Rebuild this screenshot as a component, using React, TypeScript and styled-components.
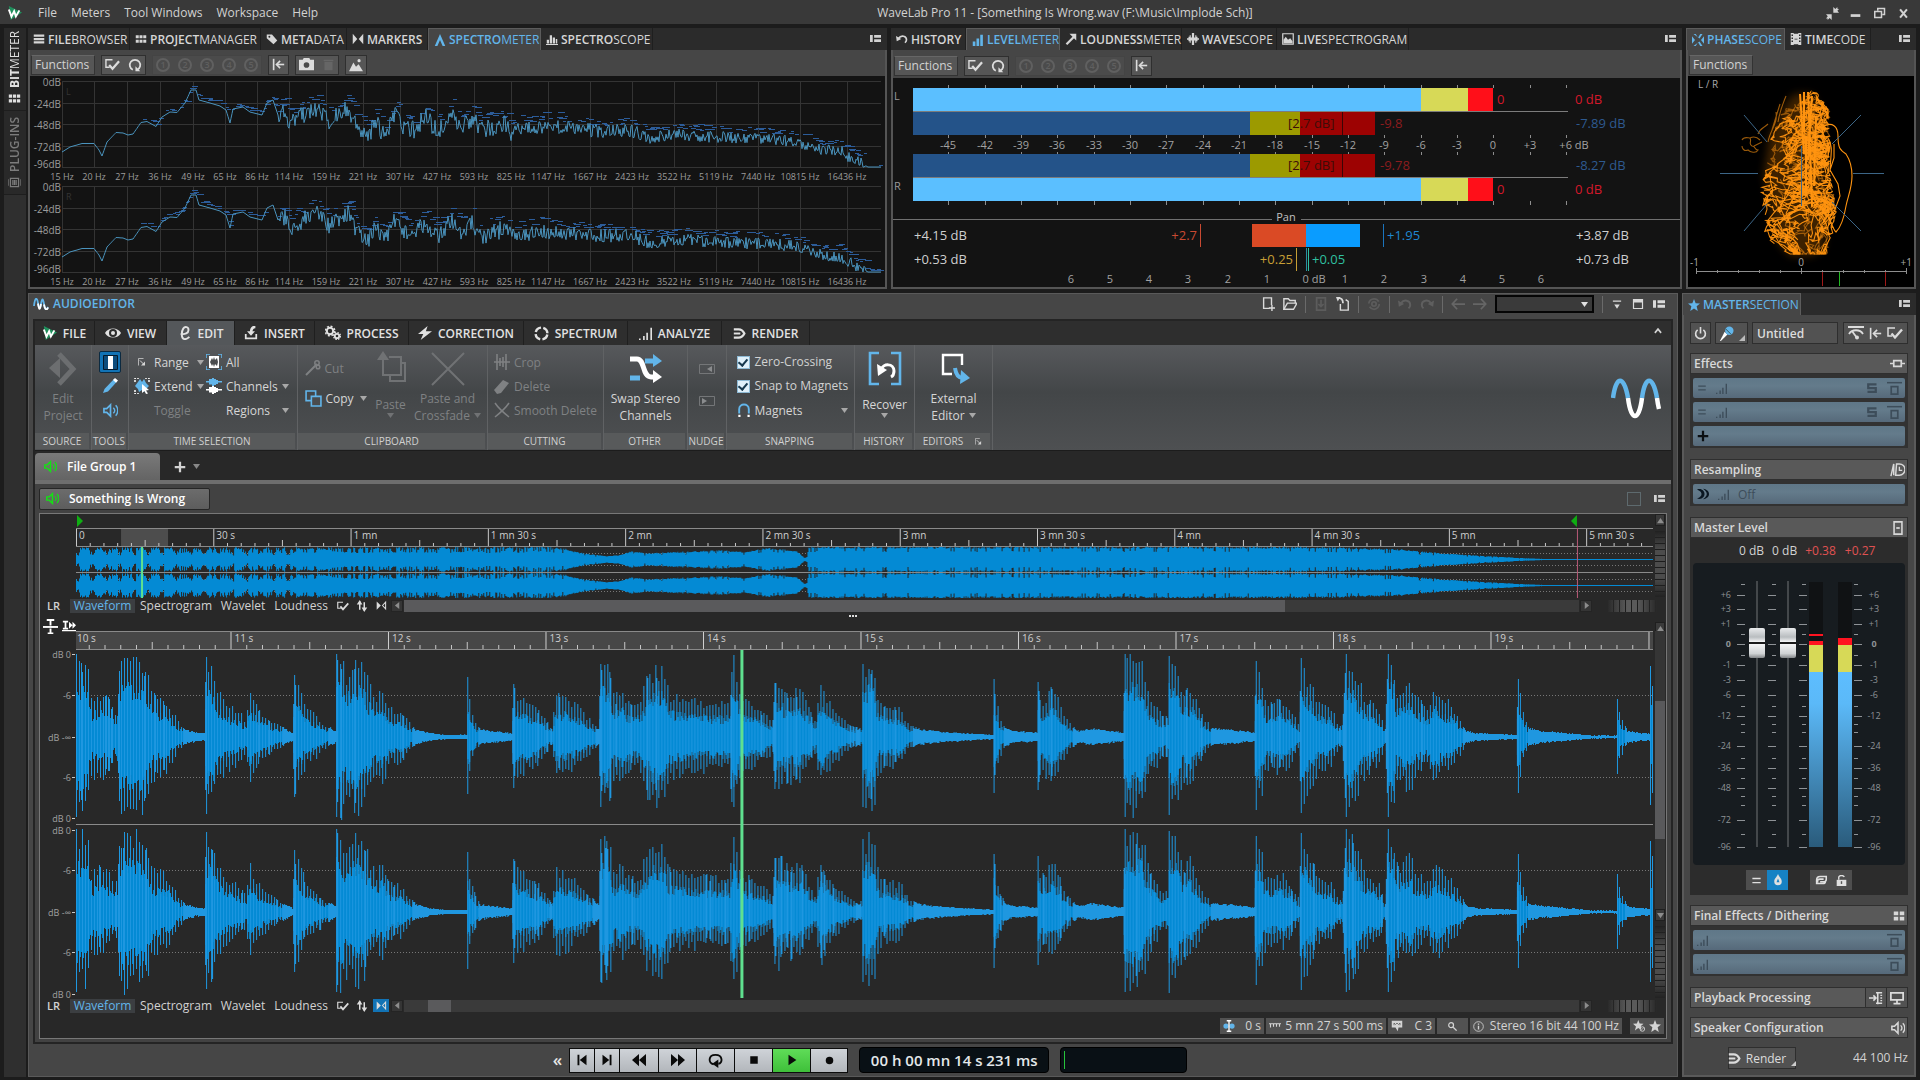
import React from 'react';
import styled, { createGlobalStyle, css } from 'styled-components';

const Global = createGlobalStyle`
  * { box-sizing: border-box; }
  html, body { margin: 0; background: #1c1c1c; }
  body, button, input, select { font-family: "Open Sans", "Noto Sans", sans-serif; font-size: 12px; color: #d2d2d2; }
  button { border: 0; padding: 0; background: none; margin: 0; }
  svg { display: block; flex: none; }
`;

const BLUE = '#62b5ea';

/* ---------- numeric helpers ---------- */

const rng = (seed: number) => () => {
  seed = (seed + 0x6d2b79f5) | 0;
  let t = Math.imul(seed ^ (seed >>> 15), 1 | seed);
  t = (t + Math.imul(t ^ (t >>> 7), 61 | t)) ^ t;
  return ((t ^ (t >>> 14)) >>> 0) / 4294967296;
};

const pct = (w: number) => (x: number) => `${((x / w) * 100).toFixed(3)}%`;

type Pts = number[][];
const lerpAt = (pts: Pts) => {
  let i = 0;
  return (x: number) => {
    while (i < pts.length - 2 && x > pts[i + 1][0]) i++;
    const [x0, y0] = pts[i];
    const [x1, y1] = pts[i + 1];
    const t = Math.min(1, Math.max(0, (x - x0) / (x1 - x0)));
    return y0 + (y1 - y0) * t;
  };
};
const lerpOnce = (pts: Pts) => (x: number) => lerpAt(pts)(x);

/* ---------- icons ---------- */

const S = (d: string, w = 2) => <path d={d} fill="none" stroke="currentColor" strokeWidth={w} />;
const F = (d: string) => <path d={d} fill="currentColor" />;

const ICONS: Record<string, React.ReactNode> = {
  list: F('M1 2h14v3H1zM1 6.500h14v3H1zM1 11h14v3H1z'),
  grid: F('M1 3h4v4H1zM6 3h4v4H6zM11 3h4v4h-4zM1 9h4v4H1zM6 9h4v4H6zM11 9h4v4h-4z'),
  tag: <><path d="M1 2h7l7 8-5 5-9-8z" fill="currentColor" /><circle cx="4.500" cy="5" r="1.300" fill="#2b2b2b" /></>,
  markers: F('M1 1l6 7-6 7zM15 1L9 8l6 7z'),
  peak: F('M8 0l7 16h-3.500L8 8l-3.500 8H1z'),
  bars: F('M1 9h3v5H1zM5 3h3v11H5zM9 6h3v8H9zM13 8h2v6h-2zM0 14.500h16v1.500H0z'),
  level: F('M1 10h3.500v6H1zM6 6h3.500v10H6zM11 1h3.500v15H11z'),
  menu: F('M0 3h4v10H0zM6 3h10v4H6zM6 9h10v4H6z'),
  undo: <>{S('M3.500 7C7 2 14 4 14 9c0 2-1 3-2 4', 2.200)}{F('M0 4l1 7 6-3z')}</>,
  redo: <>{S('M12.500 7C9 2 2 4 2 9c0 2 1 3 2 4', 2.200)}{F('M16 4l-1 7-6-3z')}</>,
  diag: <>{S('M2 15L12 5', 3)}{F('M6 1h9v9z')}</>,
  scope: F('M0 7h2V5h1.500V3H5v3h1.500V0h3v6H11V3h1.500v2H14v2h2v2h-2v2h-1.500v2H11v-3H9.500v6h-3v-6H5v3H3.500v-2H2V9H0z'),
  picture: <>{S('M1 1h14v14H1z', 1.600)}{F('M2 14V9l3-4 3 4 3-2 3 4v3z')}</>,
  film: <>{F('M1 0h4v16H1zM11 0h4v16h-4zM5 1h6v14H5z')}<path d="M2 2h2v2H2zM2 6h2v2H2zM2 10h2v2H2zM12 2h2v2h-2zM12 6h2v2h-2zM12 10h2v2h-2zM6 7.500h4v1H6z" fill="#2b2b2b" /></>,
  phase: F('M2 0h3l3 5 3-5h3l-4 6zM2 16h3l3-5 3 5h3l-4-6zM0 3l4 5-4 5zM16 3l-4 5 4 5z'),
  check: <>{S('M8 3H1v8h4', 1.500)}{S('M4.500 8.500l3.500 4 7-8', 2.400)}</>,
  loop: <>{S('M5.500 13.500A6 6 0 1 1 10.500 13.500', 2)}{F('M14 15H8.500V9.500z')}</>,
  back: <>{S('M2 1v14', 2)}{S('M15 8H6', 2)}{S('M10 3.500L5.500 8l4.500 4.500', 2)}</>,
  camera: <><path d="M0 3h4l1-2h6l1 2h4v11H0z" fill="currentColor" /><circle cx="8" cy="8.500" r="3" fill="#4a4a4a" /></>,
  trash: <>{F('M3 5h10v10H3zM2 2h12v2H2z')}</>,
  mountain: <>{F('M0 15l5-10 3 5 3-3 5 8z')}<circle cx="11.500" cy="3" r="1.800" fill="currentColor" /></>,
  eye: <><path d="M0 8C3 2 13 2 16 8c-3 6-13 6-16 0z" fill="currentColor" /><circle cx="8" cy="8" r="4" fill="#2c2c2c" /><circle cx="8" cy="8" r="2" fill="currentColor" /></>,
  e: S('M3 9c5 1 9-1 9-4.500S8 0 6 3s-3 12 2 12c2 0 3.500-1 5-2.500', 2.200),
  insert: <>{S('M2 9v5h12V9', 2)}{S('M13 1C9 1 8 4 8 8', 3)}{F('M3.500 6h9L8 11z')}</>,
  cogs: <><circle cx="5" cy="6" r="3.200" fill="none" stroke="currentColor" strokeWidth="2" /><circle cx="5" cy="6" r="4.800" fill="none" stroke="currentColor" strokeWidth="1.400" strokeDasharray="2 1.770" /><circle cx="12" cy="11" r="2.200" fill="none" stroke="currentColor" strokeWidth="1.800" /><circle cx="12" cy="11" r="3.500" fill="none" stroke="currentColor" strokeWidth="1.200" strokeDasharray="1.500 1.250" /></>,
  bolt: F('M11 0L0 9h6l-3 7L16 6h-7z'),
  ring: <circle cx="8" cy="8" r="6.300" fill="none" stroke="currentColor" strokeWidth="2.600" strokeDasharray="7.400 2.500" strokeDashoffset="-1.200" />,
  signal: F('M0 14h2v2H0zM5 11h2v5H5zM9 7h2v9H9zM14 1h2v15h-2z'),
  render: <>{S('M1 3h6c4 0 6 3 7 5-1 2-3 5-7 5H1', 2.800)}{S('M1 8h8', 2.400)}</>,
  star: F('M8 0l2.200 5.600 5.800.4-4.500 3.700L13 16l-5-3.400L3 16l1.500-6.300L0 6l5.800-.400z'),
  starOff: <>{F('M7 0l1.800 4.800 5.200.2-3.500 3L11 12H9l-2-1.400L2.500 14l1.500-5.500L0 5l5.200-.200z')}<circle cx="12.500" cy="12" r="3" fill="none" stroke="currentColor" strokeWidth="1.200" />{S('M10.500 14l4-4', 1)}</>,
  power: <>{S('M4.500 3.500a6 6 0 1 0 7 0', 2)}{S('M8 0v8', 2)}</>,
  mic: <><path d="M1 16L6 6l3 3-7 7z" fill="#fff" /><circle cx="11" cy="5" r="4.500" fill={BLUE} /><path d="M7 3l6 6" stroke="#355" strokeWidth="1" /></>,
  gauge: <>{F('M0 1h16v2H0z')}{S('M1 9c3-5 11-5 14 0', 1.800)}{S('M4 6l5 7', 1.800)}<circle cx="9" cy="12.500" r="2" fill="currentColor" /></>,
  slot: <>{S('M0 8h4M12 8h4', 1.800)}{S('M4 5h8v6H4z', 1.800)}</>,
  clock: <>{S('M1 15L4 2v12', 1.600)}{S('M7 2h3a6 6 0 0 1 0 12H6z', 1.600)}{S('M10 5v4h3', 1.400)}</>,
  fader: <>{S('M3.500 1h9v14h-9z', 1.800)}{F('M6 7h4v2H6z')}</>,
  four: F('M1 2h6v5H1zM9 2h6v5H9zM1 9h6v5H1zM9 9h6v5H9z'),
  plugin: <>{S('M8 2h7M8 14h7M10 1v14', 1.800)}{S('M13 5h2M13 8h2M13 11h2', 1.500)}{S('M0 8h8M5 5l3 3-3 3', 1.800)}</>,
  monitor: <>{S('M1 2h14v8H1z', 2)}{S('M8 10v4M4 14.500h8', 2)}</>,
  speaker: <>{S('M1 6h3l4-4v12l-4-4H1z', 1.800)}{S('M11 5c2 2 2 4 0 6', 1.500)}{S('M13.500 2.500c3 3 3 8 0 11', 1.500)}</>,
  equals: F('M2 4h12v2H2zM2 10h12v2H2z'),
  solo: S('M14 3H3v5h10v5H2', 3),
  slotTop: <>{F('M0 1h16v1.600H0z')}{S('M4.500 6h7v8h-7z', 1.800)}</>,
  arcs: <>{F('M0 2c6-2 10 2 10 6s-4 8-10 6c5-2 6-4 6-6S5 4 0 2z')}{F('M8 1c6 1 8 4 8 7s-2 6-8 7c4-3 5-5 5-7s-1-4-5-7z')}</>,
  plus: F('M6.500 1h3v5.500H15v3H9.500V15h-3V9.500H1v-3h5.500z'),
  drop: <><path d="M8 0c2 5 5 6 5 10a5 5 0 0 1-10 0c0-4 3-5 5-10z" fill="currentColor" /><path d="M8 6l2 5H6z" fill="#1682c4" /></>,
  link: S('M5 10H3V8c0-3 2-4 4-4h7v3c0 2-1 3-3 3H7M11 7H7C4 7 3 9 3 12h7c2 0 3-1 3-2', 1.800),
  lock: <><path d="M1 7h14v9H1z" fill="currentColor" />{S('M4 7V3c1-3 7-3 8 0', 2)}<path d="M7 9h2v4H7z" fill="#555" /></>,
  updown: <>{S('M5 2v11M11 3v11', 2)}{F('M1 6l4-6 3.500 6zM7.500 10L11 16l4-6z')}</>,
  flip: <>{F('M1 2l6 6-6 6z')}{S('M14 3L9.500 8l4.500 5z', 1.500)}</>,
  newdoc: <>{S('M10 13H3V1h9v8', 1.600)}{S('M12.500 9v7M9 12.500h7', 1.600)}</>,
  folder: <>{S('M1 14V2h5l2 2h6v3', 1.600)}{S('M1 14l4-7h11l-4 7z', 1.600)}</>,
  save: <>{S('M3 1h10v14H3z', 2)}{S('M8 3v7M5 8l3 3 3-3', 2)}</>,
  saveAs: <>{S('M5 8v7h9V5l-3-2', 1.600)}{S('M2 1c4 0 6 2 6 6', 2)}{F('M0 0l5 0-3 5z')}</>,
  recycle: <><circle cx="8" cy="8" r="6" fill="none" stroke="currentColor" strokeWidth="2" strokeDasharray="15 4" /><circle cx="8" cy="8" r="2.500" fill="none" stroke="currentColor" strokeWidth="2" /></>,
  left: S('M16 8H2M7 2L1.500 8 7 14', 2),
  right: S('M0 8h14M9 2l5.500 6L9 14', 2),
  bolted: F('M2 2h12v2H2zM4 8h8l-4 6z'),
  window: <>{S('M2 2h12v12H2z', 1.600)}{F('M2 2h12v4H2z')}</>,
  corner: <>{S('M1 15V1h10', 1.500)}{S('M4 5l8 8', 2)}{F('M14 7v8H6z')}</>,
  pencil: <><path d="M1 15l1.500-4L12 1l3 2.500-9 10z" fill={BLUE} /><path d="M11 2l3 2.800 2-2.200L13 0z" fill="#fff" /></>,
  extend: <><path d="M1 8l3-4 2-3 2 3 2-3 2 4 3 3-3 3-2 3-2-2-3 2-1-3z" fill={BLUE} /><path d="M1 4V0h4M11 0h4v4M1 12v4h4" fill="none" stroke="#fff" strokeWidth="1.500" strokeDasharray="2 1" /><path d="M8 6l7 6-3 .500 2 3-2 .500-1.500-3L8 15z" fill="#fff" /></>,
  all: <><path d="M3 2h10v12H3z" fill="#fff" /><path d="M4 8l2-4 1 2 1-3 1 3 2-2 1 4-1 4-2-2-1 3-1-3-1 2z" fill="#4a4c4e" /><path d="M0 4V0h4M12 0h4v4M16 12v4h-4M4 16H0v-4" fill="none" stroke={BLUE} strokeWidth="1.600" /></>,
  channels: <><path d="M0 3h3V1h3V0h2v1h2v1h2v1h4v1.500h-4V6h-2v1H8v1H6V6.500H3v-2H0z" fill={BLUE} /><path d="M0 11h3V9h3V8h2v1h2v1h2v1h4v1.500h-4V14h-2v1H8v1H6v-1.500H3v-2H0z" fill="#fff" /></>,
  scissors: <>{S('M1 15L12 4', 2)}<circle cx="12" cy="3" r="2.200" fill="none" stroke="currentColor" strokeWidth="1.500" /><circle cx="13" cy="7" r="1.800" fill="none" stroke="currentColor" strokeWidth="1.500" /></>,
  copy: <><path d="M1 1h9v9H1z" fill="none" stroke={BLUE} strokeWidth="1.500" /><path d="M6 6h9v9H6z" fill="#4a4c4e" stroke={BLUE} strokeWidth="1.500" /></>,
  crop: S('M3 0v16M12 0v16M0 8h16M6 4v8M9 3v10', 1.600),
  eraser: F('M0 12L9 2l6 3-8 10-4 1z'),
  cross: S('M1 1c4 6 9 10 14 14M15 1C11 7 6 11 1 15', 1.500),
  magnet: <><path d="M2.500 12V7c0-7 11-7 11 0v5" fill="none" stroke={BLUE} strokeWidth="2.200" /><path d="M1.500 13.500h2.500V16H1.500zM12 13.500h2.500V16H12z" fill="#fff" /></>,
  first: F('M2 1h2.500v14H2zM14 1v14L5 8z'),
  last: F('M11.500 1H14v14h-2.500zM2 1v14l9-7z'),
  rew: F('M8 1v14L0 8zM16 1v14L8 8z'),
  ffw: F('M0 1v14l8-7zM8 1v14l8-7z'),
  cycle: <>{S('M6 12C0 11 0 2 8 2s8 9 3 9.500', 2)}{F('M11 7v9L4.500 11.500z')}</>,
  stop: F('M3 3h10v10H3z'),
  play: F('M4 2v12l9-6z'),
  rec: <circle cx="8" cy="8" r="4" fill="currentColor" />,
  ibeam: <><circle cx="4" cy="8" r="3.500" fill={BLUE} /><circle cx="12" cy="8" r="3.500" fill={BLUE} /><path d="M5 1h6M8 1v14M5 15h6" stroke="#fff" strokeWidth="1.800" /></>,
  rule: S('M0 5h16M2 5v5M6 5v4M10 5v4M14 5v4', 1.500),
  note: <><path d="M1 1h14v9h-5l-1 5-3-5H1z" fill="currentColor" /><path d="M4 7V4l2 2 2-2 2 2 2-2v3" fill="none" stroke="#555" /></>,
  zoom: <><circle cx="6" cy="6" r="3.500" fill="none" stroke="currentColor" strokeWidth="1.800" />{S('M9 9l5 5', 2)}</>,
  info: <><circle cx="8" cy="8" r="7" fill="none" stroke="currentColor" strokeWidth="1.200" />{F('M7 3.500h2v2H7zM7 7h2v5.500H7z')}</>,
  minimize: F('M1 9h14v4H1z'),
  restore: <>{S('M1 6h9v8H1z', 2)}{S('M5 5V2h9v8h-3', 2)}</>,
  close: S('M3 2l10 12M13 2L3 14', 3),
  shrink: <>{F('M9 0l2.500 2.500L14 0v2l2 .500-2 2 2 2.500H9z')}{F('M0 9h7v7l-2.500-2.500L2 16v-2H0l2.200-2.500z')}</>,
  rack: <>{S('M3 3h10v10H3z', 1.500)}{S('M0 4v8M16 4v8M6 5v6M8 5v6M10 5v6', 1.500)}</>,
  vsplit: <>{S('M4 1h8M8 1v6M8 10v6M5 15.500h6', 2)}{F('M0 7.500h16v2H0z')}</>,
  hsplit: <>{S('M1 3h6M4 3v8M1 11h6', 2)}{F('M8 3l4 4-4 4zM12 3l4 4-4 4zM0 12.500h16v1.500H0z')}</>,
  caret: S('M3 11l5-6 5 6', 2.600),
};

const Ico = ({ n, s = 14, w, c }: { n: string; s?: number; w?: number; c?: string }) => (
  <svg width={w ?? s} height={s} viewBox="0 0 16 16" style={c ? { color: c } : undefined} aria-hidden="true">{ICONS[n]}</svg>
);

const Logo = ({ s = 14 }: { s?: number }) => (
  <svg width={s} height={s} viewBox="0 0 16 16" aria-hidden="true">
    <path d="M1 0l15 7.500L3 16z" fill="#1f8f5c" />
    <path d="M1 4l3 8 3-6 2 6 4-7" fill="none" stroke="#fff" strokeWidth="2.200" />
  </svg>
);

const Down = ({ c = '#a8a8a8' }: { c?: string }) => (
  <svg width="7" height="5" viewBox="0 0 7 5" aria-hidden="true"><path d="M0 0h7L3.500 5z" fill={c} /></svg>
);

/* ---------- frame ---------- */

const Page = styled.div`min-height: 100vh; display: flex; flex-direction: column; background: #1c1c1c; line-height: 16px;`;
const TitleBar = styled.header`
  height: 24px; background: #393939; display: grid; grid-template-columns: 1fr auto 1fr; align-items: center; padding: 2px 8px 0;
`;
const MenuBar = styled.nav`display: flex; align-items: center; gap: 14px; svg { margin-right: 2px; }`;
const MenuItem = styled.button`font-size: 12px; line-height: 16px;`;
const TitleText = styled.h1`margin: 0; font-size: 12px; font-weight: 400; padding-left: 210px;`;
const WinButtons = styled.div`display: flex; justify-content: flex-end; gap: 10px; button { width: 14px; height: 14px; }`;
const Workspace = styled.div`flex: 1; display: flex; padding: 4px;`;
const SideStrip = styled.aside`width: 22px; background: #2f2f2f; margin-right: 2px; flex: none;`;
const SideTab = styled.button<{ $dim?: boolean; $h: number }>`
  display: flex; align-items: center; gap: 4px; width: 22px; height: ${p => p.$h}px; justify-content: flex-start;
  padding: 5px 0; writing-mode: vertical-rl; transform: rotate(180deg); font-size: 12px; line-height: 16px; white-space: nowrap;
  color: ${p => (p.$dim ? '#7c7c7c' : '#e0e0e0')}; font-weight: ${p => (p.$dim ? 600 : 400)}; background: #292929; border-top: 1px solid #1e1e1e;
  b { font-weight: 700; }
`;
const Main = styled.main`flex: 1; min-width: 0; display: flex; flex-direction: column; gap: 4px;`;
const Row = styled.div`display: flex; gap: 4px;`;
const BottomRow = styled(Row)`flex: 1;`;
const Dock = styled.section<{ $grow?: number }>`
  ${p => (p.$grow ? css`flex: ${p.$grow} 1 0;` : css`flex: 0 0 230px;`)} min-width: 0; display: flex; flex-direction: column;
`;
const DockBody = styled.div`border: solid #555; border-width: 0 2px 2px; background: #464646;`;
const TabStrip = styled.div`display: flex; height: 22px; background: #2b2b2b; padding-right: 5px;`;
const Tab = styled.button<{ $on?: boolean; $w: number }>`
  width: ${p => p.$w}px; display: flex; align-items: center; gap: 3px; padding: 0 0 0 5px; font-size: 12px; white-space: nowrap;
  color: ${p => (p.$on ? BLUE : '#d6d6d6')}; background: ${p => (p.$on ? '#464646' : 'transparent')};
  border: solid ${p => (p.$on ? '#5c5c5c' : '#1f1f1f')}; border-width: ${p => (p.$on ? '1px 1px 0' : '0 1px 0 0')};
  b { font-weight: 600; }
`;
const MenuDots = styled.button`margin-left: auto; width: 12px; height: 20px;`;
const Toolbar = styled.div<{ $h: number }>`height: ${p => p.$h}px; display: flex; align-items: center; gap: 6px; padding: 3px 0 0 1px;`;
const FnButton = styled.button`
  width: 64px; height: 20px; background: #565656; border: 1px solid #333; border-top-color: #666; text-align: left; padding-left: 3px; font-size: 12px;
`;
const ToolGroup = styled.div<{ $dim?: boolean }>`
  height: 20px; display: flex; align-items: center; gap: 8px; padding: 0 3px; background: ${p => (p.$dim ? '#4b4b4b' : '#565656')};
  border: 1px solid ${p => (p.$dim ? '#444' : '#2f2f2f')}; color: ${p => (p.$dim ? '#5f5f5f' : '#dcdcdc')};
  button { color: inherit; }
`;
const Preset = styled.button`
  width: 14px; height: 14px; border-radius: 50%; border: 2px solid #606060; font-size: 9px; line-height: 9px; text-align: center; font-weight: 600;
`;
const Plot = styled.svg`width: 100%; background: #131313; font-family: "Open Sans", "Noto Sans", sans-serif;`;

const TabTitle = ({ a, b }: { a: string; b: string }) => <span><b>{a}</b>{b}</span>;

const Tools = ({ h, camera }: { h: number; camera?: boolean }) => (
  <Toolbar $h={h}>
    <FnButton>Functions</FnButton>
    <ToolGroup><button aria-label="Options"><Ico n="check" s={15} /></button><button aria-label="Refresh"><Ico n="loop" s={14} /></button></ToolGroup>
    <ToolGroup $dim>{[1, 2, 3, 4, 5].map(n => <Preset key={n}>{n}</Preset>)}</ToolGroup>
    <ToolGroup><button aria-label="Reset"><Ico n="back" s={13} /></button></ToolGroup>
    {camera && <>
      <ToolGroup><button aria-label="Snapshot"><Ico n="camera" s={15} /></button><button aria-label="Delete snapshot"><Ico n="trash" s={13} c="#666" /></button></ToolGroup>
      <ToolGroup><button aria-label="Picture"><Ico n="mountain" s={14} /></button></ToolGroup>
    </>}
  </Toolbar>
);

/* ---------- spectrometer ---------- */

const SPEC: Pts = [[62, 152], [70, 147], [82, 143.5], [94, 143.5], [99, 150], [102, 156], [107, 142], [116, 132.5], [123, 133], [128, 135], [133, 134], [141, 122.5], [147, 121.5], [156, 126.5], [162, 117], [170, 112], [177, 112.5], [185, 103], [191, 90], [196, 90], [199, 100], [210, 103], [220, 106], [226, 110], [230, 123], [233, 109], [243, 107], [250, 112], [262, 115], [267, 103], [273, 100], [278, 115], [285, 113], [290, 122], [300, 117], [316, 108], [330, 122], [348, 107], [356, 125], [368, 138], [375, 122], [385, 136], [395, 115], [405, 128], [415, 130], [425, 116], [437, 131], [453, 115], [460, 128], [473, 118], [480, 131], [505, 124], [511, 132], [540, 127], [560, 127], [600, 131], [630, 130], [650, 138], [680, 134], [700, 136], [730, 138], [760, 138], [800, 142], [820, 150], [840, 151], [855, 160], [868, 167], [881, 167]];
const FREQ: [number, string][] = [[62, '15 Hz'], [94, '20 Hz'], [127, '27 Hz'], [160, '36 Hz'], [193, '49 Hz'], [225, '65 Hz'], [257, '86 Hz'], [289, '114 Hz'], [326, '159 Hz'], [363, '221 Hz'], [400, '307 Hz'], [437, '427 Hz'], [474, '593 Hz'], [511, '825 Hz'], [548, '1147 Hz'], [590, '1667 Hz'], [632, '2423 Hz'], [674, '3522 Hz'], [716, '5119 Hz'], [758, '7440 Hz'], [800, '10815 Hz'], [847, '16436 Hz']];

function spectrumPaths(seed: number, dy: number) {
  const r = rng(seed);
  const f = lerpAt(SPEC);
  let line = '';
  let hold = '';
  for (let x = 62; x <= 881; x++) {
    const noisy = x > 278 && x < 866 ? 1 : 0;
    const amp = x < 520 ? 9 : x < 640 ? 7 : 6;
    const base = f(x);
    const y = Math.min(167, base + noisy * (r() - 0.5) * 2 * amp);
    line += `${line ? 'L' : 'M'}${x - 30} ${(y - 76 + dy).toFixed(1)}`;
    if (x > 140 && r() < 0.36) {
      const lift = noisy ? 8 + r() * 8 : 2 + r() * 3;
      const hy = Math.round(base - (x < 560 ? lift : lift * 0.75) - 76 + dy) + 0.5;
      hold += `M${x - 30} ${hy}h${3 + Math.round(r() * 4)}`;
    }
  }
  return { line, hold };
}

const SPEC_W = 855;
const Spectrum = () => {
  const p = pct(SPEC_W);
  const sets = [{ ...spectrumPaths(11, 0), top: 5, ch: 'L' }, { ...spectrumPaths(52, 105), top: 110, ch: 'R' }];
  return (
    <Plot height="211" role="img" aria-label="Spectrum of left and right channels">
      {sets.map(s => (
        <g key={s.ch}>
          {['0dB', '-24dB', '-48dB', '-72dB', '-96dB'].map((t, i) => {
            const y = s.top + [0, 22, 43, 65, 86][i] + 0.5;
            return <g key={t}>
              <line x1={p(32)} x2={p(851)} y1={y} y2={y} stroke="#343434" />
              <text x={p(31)} y={y + (i === 4 ? 0 : 4)} fontSize="10" fill="#9c9c9c" textAnchor="end">{t}</text>
            </g>;
          })}
          {FREQ.map(([x, t]) => (
            <g key={t}>
              <line x1={p(x - 30 + 0.5)} x2={p(x - 30 + 0.5)} y1={s.top} y2={s.top + 86} stroke="#343434" />
              <text x={p(x - 30)} y={s.top + 99} fontSize="9" fill="#9c9c9c" textAnchor="middle">{t}</text>
            </g>
          ))}
          <text x={p(36)} y={s.top + 14} fontSize="9" fill="#333">{s.ch}</text>
        </g>
      ))}
      <svg width="100%" height="211" viewBox={`0 0 ${SPEC_W} 211`} preserveAspectRatio="none">
        {sets.map(s => <g key={s.ch} fill="none">
          <path d={s.hold} stroke="#2c5c99" />
          <path d={s.line} stroke="#4a93bd" />
        </g>)}
      </svg>
    </Plot>
  );
};

/* ---------- level meter ---------- */

const DB: [number, string][] = [[948, '-45'], [985, '-42'], [1021, '-39'], [1057, '-36'], [1094, '-33'], [1130, '-30'], [1166, '-27'], [1203, '-24'], [1239, '-21'], [1275, '-18'], [1312, '-15'], [1348, '-12'], [1384, '-9'], [1421, '-6'], [1457, '-3'], [1493, '0'], [1530, '+3'], [1566, '+6 dB']];
const PAN: [number, string][] = [[1071, '6'], [1110, '5'], [1149, '4'], [1188, '3'], [1228, '2'], [1267, '1'], [1314, '0 dB'], [1345, '1'], [1384, '2'], [1424, '3'], [1463, '4'], [1502, '5'], [1541, '6']];

const LevelMeter = () => {
  const q = pct(787);
  const p = (x: number) => q(x - 893);
  const w = (a: number, b: number) => q(b - a);
  const T = ({ x, y, c, s = 13, a, children }: { x: number; y: number; c: string; s?: number; a?: 'middle' | 'end'; children: string }) => (
    <text x={p(x)} y={y} fontSize={s} fill={c} textAnchor={a}>{children}</text>
  );
  const B = ({ a, b, y, h, c }: { a: number; b: number; y: number; h: number; c: string }) => (
    <rect x={p(a)} width={w(a, b)} y={y} height={h} fill={c} shapeRendering="crispEdges" />
  );
  return (
    <Plot height="209" role="img" aria-label="Level meter">
      {DB.map(([x, t]) => (
        <g key={t}>
          {[[7, 10], [57, 60], [74, 77], [123, 127]].map(([a, b]) => <line key={a} x1={p(x + 0.5)} x2={p(x + 0.5)} y1={a} y2={b} stroke="#8f8f8f" />)}
          <T x={t === '+6 dB' ? x + 8 : x} y={71} c="#a2a2a2" s={11} a="middle">{t}</T>
        </g>
      ))}
      {[{ peak: 10, rms: 34, line: 33 }, { peak: 100, rms: 76, line: 99 }].map((c, i) => (
        <g key={i}>
          <B a={913} b={1421} y={c.peak} h={23} c="#5bbfff" />
          <B a={1421} b={1468} y={c.peak} h={23} c="#d7d957" />
          <B a={1468} b={1493} y={c.peak} h={23} c="#ff0f19" />
          <B a={913} b={1250} y={c.rms} h={23} c="#245389" />
          <B a={1250} b={1300} y={c.rms} h={23} c="#9c9a00" />
          <B a={1300} b={1375} y={c.rms} h={23} c="#9d0202" />
          <B a={1342} b={1343} y={c.rms} h={23} c="#3a0505" />
          <B a={913} b={1568} y={c.line} h={1} c="#7c7c7c" />
          <T x={1497} y={c.peak + 16} c="#d3182a">0</T>
          <T x={1575} y={c.peak + 16} c="#d3182a">0 dB</T>
          <T x={1288} y={c.rms + 16} c="#3c0d08">[2.7 dB]</T>
        </g>
      ))}
      <T x={1380} y={50} c="#8c1c1e">-9.8</T>
      <T x={1380} y={92} c="#8c1c1e">-9.78</T>
      <T x={1576} y={50} c="#2e5a90">-7.89 dB</T>
      <T x={1576} y={92} c="#2e5a90">-8.27 dB</T>
      <T x={894} y={22} c="#9a9a9a" s={11}>L</T>
      <T x={894} y={112} c="#9a9a9a" s={11}>R</T>
      <line x1={p(893)} x2={p(1272)} y1="141.5" y2="141.5" stroke="#707070" />
      <line x1={p(1301)} x2="100%" y1="141.5" y2="141.5" stroke="#707070" />
      <T x={1286} y={143} c="#c0c0c0" s={11} a="middle">Pan</T>
      <T x={914} y={162} c="#cfcfcf">+4.15 dB</T>
      <T x={914} y={186} c="#cfcfcf">+0.53 dB</T>
      <T x={1576} y={162} c="#cfcfcf">+3.87 dB</T>
      <T x={1576} y={186} c="#cfcfcf">+0.73 dB</T>
      <T x={1197} y={162} c="#c94a32" a="end">+2.7</T>
      <B a={1200} b={1201} y={146} h={23} c="#c94a32" />
      <B a={1252} b={1306} y={146} h={23} c="#da4a25" />
      <B a={1306} b={1360} y={146} h={23} c="#0a9cff" />
      <B a={1383} b={1384} y={146} h={23} c="#1b74bd" />
      <T x={1387} y={162} c="#1f87d2">+1.95</T>
      <T x={1293} y={186} c="#c79f35" a="end">+0.25</T>
      <B a={1296} b={1297} y={170} h={23} c="#c79f35" />
      <B a={1306} b={1307} y={170} h={23} c="#2a8fa0" />
      <B a={1308} b={1309} y={170} h={23} c="#2fc0a0" />
      <T x={1312} y={186} c="#2fc0a0">+0.05</T>
      {PAN.map(([x, t], i) => <T key={i} x={x} y={205} c="#a2a2a2" s={11} a="middle">{t}</T>)}
    </Plot>
  );
};

/* ---------- phase scope ---------- */

function phasePaths() {
  const r = rng(77);
  const L = lerpOnce([[92, 1797], [105, 1788], [125, 1776], [150, 1768], [175, 1758], [200, 1764], [232, 1766], [245, 1774], [254, 1790]]);
  const R = lerpOnce([[92, 1814], [110, 1826], [140, 1826], [173, 1825], [210, 1832], [232, 1829], [253, 1824]]);
  const out: string[] = [];
  for (let k = 0; k < 88; k++) {
    let y = 92 + r() * 120;
    let t = 0.1 + Math.sqrt(r()) * 0.9;
    let d = '';
    const n = 14 + Math.floor(r() * 26);
    const vy = 1.4 + r() * 4;
    const jx = 0.08 + r() * 0.26;
    for (let i = 0; i < n; i++) {
      y = Math.min(254, Math.max(91, y + (r() - 0.36) * vy * 3));
      t = Math.min(1.05, Math.max(0, t + (r() - 0.5) * jx));
      const x = L(y) + (R(y) - L(y)) * t + (r() - 0.5) * 3;
      d += `${i ? 'L' : 'M'}${(x - 1688).toFixed(1)} ${(y - 76).toFixed(1)}`;
    }
    out.push(d);
  }
  return out;
}

const PhasePlot = styled(Plot)`background: #000;`;

const PhaseScope = () => (
  <PhasePlot height="211" viewBox="0 0 226 211" role="img" aria-label="Phase scope">
    <defs><filter id="haze" x="-20%" y="-20%" width="140%" height="140%"><feGaussianBlur stdDeviation="4" /></filter></defs>
    <text x="10" y="12" fontSize="10" fill="#a8a8a8">L / R</text>
    <path d="M106 18h18l10 20 2 40 2 60-2 34-12 8h-22l-14-16-12-66 6-40 16-30z" fill="#7a4300" opacity=".5" filter="url(#haze)" />
    <g fill="none" stroke="#ff9410" strokeWidth="1.100">
      {phasePaths().map((d, i) => <path key={i} d={d} opacity={i % 3 ? 0.95 : 0.5} />)}
      <path d="M136 50c8-4 14 0 14 10 0 12 2 14 8 18 4 6 6 14 6 22 0 12-4 20-6 30-2 12-6 22-10 26-3-2-4-10-12-22" />
      <path d="M146 68v14l-4 12 8 14 2 12-6 16-8 10M140 62c6 8 2 20 2 34" />
      <path d="M80 48c-4 4-8 4-10 10M54 64c2-4 6-2 8-2 2 4-2 6 2 8 4 0 2 4 6 4-2 4-8 2-10 0-4 2-6-2-6-4M62 62c4-2 8 0 10 2M66 70l8-4M88 36c2 12-6 18-8 30M92 28l-8 26M98 20c-4 10-6 14-8 26" opacity=".6" />
      <path d="M116 16v40M120 16l2 50M112 18l4 60M124 20l-4 64M118 60v60M128 40l-2 70M122 70l2 60" strokeWidth="2" />
    </g>
    <path d="M32 97.500H70M165 97.500h31M113.500 70v60M56 39L79 66M173 39L144 68M56 155L79 128M173 155L144 126" stroke="#3c6687" />
    <path d="M8 195.500H219" stroke="#8e8e8e" />
    {Array.from({ length: 11 }, (_, i) => <path key={i} d={`M${8.5 + i * 21} ${i % 5 ? 194 : 192}v${i % 5 ? 3 : 6}`} stroke="#8e8e8e" />)}
    <text x="2" y="190" fontSize="10" fill="#a8a8a8">-1</text>
    <text x="113" y="190" fontSize="10" fill="#a8a8a8" textAnchor="middle">0</text>
    <text x="224" y="190" fontSize="10" fill="#a8a8a8" textAnchor="end">+1</text>
    <path d="M134.500 196v14M197.500 196v14" stroke="#a01818" />
    <path d="M151.500 196v14" stroke="#22b822" />
  </PhasePlot>
);

/* ---------- editor ---------- */

const Editor = styled.section`flex: 1; min-width: 0; display: flex; flex-direction: column; background: #464646; border: 1px solid #5a5a5a;`;
const EditorHead = styled.div`height: 25px; display: flex; align-items: center; gap: 4px; padding: 0 12px 5px 4px; color: ${BLUE};
  h2 { margin: 0; font-size: 12px; font-weight: 600; flex: 1; }
`;
const HeadTools = styled.div`display: flex; align-items: center; gap: 8px; color: #dadada; button { color: inherit; height: 14px; }`;
const Sep = styled.i`width: 1px; height: 17px; background: #6a6a6a;`;
const HistorySelect = styled.select`
  width: 99px; height: 18px; appearance: none; background: #3a3a3a; border: 2px solid #050505; color: transparent; padding: 0;
`;
const SelectWrap = styled.label`display: grid; align-items: center; justify-items: end;
  > * { grid-area: 1 / 1; } svg { margin-right: 6px; pointer-events: none; z-index: 1; }
`;
const EditorInner = styled.div`flex: 1; margin: 0 4px; border: 2px solid #242424; display: flex; flex-direction: column;`;
const RibbonTabs = styled.div`display: flex; height: 24px; background: #2e2e2e; align-items: stretch; padding-right: 6px;`;
const RibbonTab = styled.button<{ $on?: boolean; $w: number }>`
  width: ${p => p.$w}px; display: flex; align-items: center; justify-content: center; gap: 6px; font-weight: 600; font-size: 12px; color: #e2e2e2;
  background: ${p => (p.$on ? '#54575a' : 'transparent')}; border-right: 1px solid #1f1f1f;
`;
const Ribbon = styled.div`display: flex; height: 105px; background: linear-gradient(#57595c, #434648 45%, #4e5052);`;
const Group = styled.fieldset<{ $w: number }>`
  width: ${p => p.$w}px; margin: 0; padding: 0; min-width: 0; border: 0; border-right: 1px solid #606264; display: flex; flex-direction: column; flex: none;
`;
const GroupBody = styled.div`flex: 1; display: flex; padding-top: 5px; justify-content: center;`;
const GroupName = styled.div`
  height: 16px; margin: 0 2px 1px 0; background: #585a5b; font-size: 10px; line-height: 16px; text-align: center; color: #d0d0d0; display: flex; justify-content: center; align-items: center; gap: 12px;
`;
const Stack = styled.div<{ $w?: number; $row?: number }>`
  display: grid; grid-auto-rows: ${p => p.$row ?? 24}px; align-content: start; ${p => p.$w && css`width: ${p.$w}px;`}
`;
const TallStack = styled(Stack)`padding-top: 3px;`;
const Cmd = styled.button<{ $dim?: boolean }>`
  display: flex; align-items: center; gap: 4px; white-space: nowrap; color: ${p => (p.$dim ? '#7f8183' : '#d6d6d6')}; font-size: 12px; text-align: left;
  span { flex: none; } svg:last-child:not(:first-child) { margin-left: auto; }
`;
const Blank = styled.i`width: 16px; flex: none;`;
const Gap = styled.i<{ $w: number }>`width: ${p => p.$w}px; flex: none;`;
const BigCmd = styled.button<{ $dim?: boolean; $w: number }>`
  width: ${p => p.$w}px; height: 76px; display: flex; flex-direction: column; align-items: center; color: ${p => (p.$dim ? '#7f8183' : '#d6d6d6')};
`;
const BigLabel = styled.span`flex: 1; display: flex; flex-direction: column; align-items: center; justify-content: center; font-size: 12px; line-height: 17px;
  span { display: flex; align-items: center; gap: 4px; white-space: nowrap; }
`;
const Tool = styled.button<{ $on?: boolean }>`
  width: 22px; height: 22px; margin: 1px auto; display: grid; place-items: center;
  ${p => p.$on && css`background: #1273b5; border: 1px solid #0c2a40; border-radius: 2px;`}
`;
const Tick = styled.label`
  display: flex; align-items: center; gap: 5px; white-space: nowrap; font-size: 12px;
  input { appearance: none; margin: 0; width: 13px; height: 13px; background: #dff0fa; border: 1px solid #8db9d4; display: grid; place-items: center; }
  input:checked::after { content: ""; width: 4px; height: 7px; margin-bottom: 2px; border: solid #16384e; border-width: 0 2px 2px 0; transform: rotate(40deg); }
`;
const FileTabs = styled.div`height: 30px; padding-top: 2px; background: #282828; border-top: 1px solid #1c1c1c; display: flex; align-items: stretch;`;
const FileTab = styled.button`
  width: 125px; display: flex; align-items: center; gap: 10px; padding-left: 9px; font-weight: 600; font-size: 12px; color: #fff; background: linear-gradient(#7a7a7a, #646464); border-radius: 4px 4px 0 0;
`;
const AddTab = styled.button`display: flex; align-items: center; gap: 7px; padding: 0 14px;`;
const FileBody = styled.div`border-top: 4px solid #6e6e6e; background: #424242; flex: 1; padding: 0 4px 3px; display: flex; flex-direction: column;`;
const FileHead = styled.div`height: 29px; display: flex; align-items: center; gap: 13px; padding-right: 2px;`;
const ClipTab = styled.button`
  width: 171px; height: 22px; display: flex; align-items: center; gap: 10px; padding-left: 6px; margin-right: auto; background: linear-gradient(#6c6c6c, #5d5d5d); border: 1px solid #262626; border-radius: 2px; font-size: 12px; font-weight: 600; color: #fff;
`;
const Empty = styled.i`width: 14px; height: 14px; border: 1px solid #5e6a6e;`;
const WaveFrame = styled.div`flex: 1; border: 1px solid #777; background: #282828; display: flex; flex-direction: column;`;
const WaveGrid = styled.div`display: grid; grid-template-columns: 36px minmax(0, 1fr) 13px;`;
const WaveSvg = styled(Plot)`background: transparent; min-width: 0; overflow: hidden;`;
const ScaleSvg = styled(Plot)`background: transparent; width: 36px; overflow: visible;`;
const VBar = styled.div`display: flex; flex-direction: column; padding: 0 1px 0 2px;`;
const ArrowBox = styled.button`height: 12px; background: #3a3a3a; border: 1px solid #1f1f1f; display: grid; place-items: center; color: #999; flex: none;`;
const VTrack = styled.div`flex: 1; background: #353535; padding-top: 70px;`;
const VThumb = styled.div`height: 138px; background: #59595b;`;
const VJog = styled.div<{ $h: number }>`
  height: ${p => p.$h}px; margin-top: 5px; background: linear-gradient(#222, transparent 30%, transparent 70%, #222), repeating-linear-gradient(#1c1c1c 0 1px, #4c4c4c 1px 6px);
`;
const HJog = styled.div`width: 50px; height: 12px; background: linear-gradient(90deg, #282828, transparent 40%, transparent 60%, #282828), repeating-linear-gradient(90deg, #1c1c1c 0 1px, #5a5a5a 1px 6px);`;
const ViewRow = styled.div`display: flex; align-items: center; height: 17px; padding: 0 9px 2px 7px; font-size: 12px; line-height: 13px; > b { font-weight: 600; width: 23px; font-size: 11px; }`;
const ViewTab = styled.button<{ $on?: boolean; $w: number }>`
  width: ${p => p.$w}px; height: 14px; line-height: 13px; font-size: 12px; text-align: center; ${p => p.$on && css`background: #3b3e41; color: ${BLUE};`}
`;
const ViewIcon = styled.button<{ $on?: boolean }>`width: 16px; height: 13px; margin: 0 1px 0 2px; display: grid; place-items: center; color: #dcdcdc; ${p => p.$on && css`background: #1273b5;`}`;
const HTrack = styled.div<{ $lead: number; $size: number }>`
  flex: 1; height: 12px; background: #3a3a3a; display: flex; &::before { content: ""; width: ${p => p.$lead}%; }
  &::after { content: ""; width: ${p => p.$size}%; background: #5a5a5c; }
`;
const HArrow = styled.button`width: 12px; height: 12px; background: #353535; border: 1px solid #242424; color: #888; display: grid; place-items: center; margin: 0 1px;`;
const Splitter = styled.div`height: 16px; display: grid; grid-template-columns: 100px 1fr 100px; justify-items: center; align-items: start; color: #fff;
  > div { display: flex; justify-self: start; gap: 4px; padding: 4px 0 0 3px; }
  > i { width: 8px; height: 2px; background: repeating-linear-gradient(90deg, #ddd 0 2px, transparent 2px 3px); }
  > button { width: 10px; justify-self: end; align-self: end; margin-right: 1px; }
`;
const StatusRow = styled.footer`display: flex; justify-content: flex-end; align-items: center; height: 22px; padding-right: 2px; gap: 2px; font-size: 12px;`;
const StatusCell = styled.button<{ $w: number }>`
  width: ${p => p.$w}px; height: 16px; background: #525252; display: flex; align-items: center; justify-content: space-between; padding: 0 3px; line-height: 16px; font-size: 12px; color: #d4d4d4; white-space: nowrap;
`;
const Transport = styled.div`height: 32px; display: flex; align-items: center; justify-content: center; padding-left: 34px; gap: 11px;`;
const Chevrons = styled.button`font-size: 17px; line-height: 18px; font-weight: 600; color: #e6e6e6; margin-right: -4px;`;
const KeyRow = styled.div`display: flex; gap: 1px; background: #0c0c0c; border: 1px solid #0c0c0c;`;
const Key = styled.button<{ $w: number; $go?: boolean }>`
  width: ${p => p.$w}px; height: 23px; display: grid; place-items: center; color: #0a0a0a; background: ${p => (p.$go ? 'linear-gradient(#5fdc58, #3fc03a)' : 'linear-gradient(#cfd3d8, #b2b6bb)')};
`;
const Readout = styled.output<{ $w: number }>`
  width: ${p => p.$w}px; height: 26px; background: #091015; border: 1px solid #000; border-radius: 4px; color: #e4e8ea; font-weight: 600; font-size: 15px; line-height: 24px; text-align: center; display: flex; justify-content: center;
  i { width: 1px; height: 18px; background: #27c43a; margin: 3px auto 0 3px; }
`;

const ENV: Pts = [[76, 1], [82, 1], [88, 0.88], [91, 0.5], [98, 0.57], [108, 0.5], [115, 0.3], [118, 0.6], [120, 1], [141, 1], [146, 0.9], [152, 0.55], [160, 0.52], [168, 0.45], [172, 0.33], [178, 0.2], [185, 0.1], [195, 0.06], [204, 0.05], [205.5, 0.97], [212, 0.85], [218, 0.6], [225, 0.45], [238, 0.35], [246, 0.2], [249, 0.62], [256, 0.42], [262, 0.3], [272, 0.2], [285, 0.1], [292, 0.05], [294, 0.75], [299, 0.62], [305, 0.4], [315, 0.28], [325, 0.15], [335, 0.08], [336, 1], [341, 1], [345, 0.8], [352, 0.9], [357, 1], [362, 0.92], [368, 0.72], [376, 0.5], [382, 0.68], [388, 0.38], [400, 0.33], [408, 0.2], [415, 0.1], [430, 0.05], [445, 0.03], [466, 0.03], [467, 0.72], [470, 0.4], [475, 0.2], [480, 0.1], [490, 0.08], [505, 0.06], [511, 0.05], [513, 0.64], [520, 0.52], [530, 0.42], [540, 0.33], [551, 0.1], [555, 0.55], [567, 0.5], [575, 0.42], [585, 0.28], [598, 0.1], [600, 0.88], [603, 0.95], [609, 0.85], [614, 0.5], [621, 0.62], [628, 0.45], [640, 0.45], [645, 0.75], [655, 0.88], [664, 0.85], [668, 0.55], [690, 0.48], [710, 0.45], [729, 0.45], [731, 0.85], [733, 1], [736, 0.8], [740, 0.5], [750, 0.42], [762, 0.34], [772, 0.2], [774, 0.65], [778, 0.75], [785, 0.6], [800, 0.62], [806, 0.45], [815, 0.2], [819, 0.7], [825, 0.5], [835, 0.33], [845, 0.2], [858, 0.1], [861, 0.15], [862, 0.88], [868, 0.95], [874, 0.9], [878, 0.45], [890, 0.4], [900, 0.36], [908, 0.15], [920, 0.1], [940, 0.07], [965, 0.05], [992, 0.03], [993, 0.7], [998, 0.3], [1004, 0.12], [1012, 0.08], [1036, 0.06], [1037, 0.66], [1040, 0.45], [1052, 0.62], [1058, 0.5], [1062, 0.3], [1070, 0.15], [1078, 0.08], [1090, 0.11], [1122, 0.06], [1124, 1], [1140, 1], [1144, 0.8], [1148, 0.55], [1155, 0.4], [1162, 0.25], [1167, 0.3], [1168, 0.98], [1176, 0.88], [1182, 0.6], [1190, 0.7], [1195, 0.45], [1200, 0.3], [1210, 0.12], [1225, 0.1], [1253, 0.06], [1255, 0.92], [1260, 0.78], [1265, 0.45], [1283, 0.48], [1290, 0.35], [1298, 0.15], [1300, 0.95], [1306, 0.78], [1312, 0.68], [1316, 0.45], [1330, 0.4], [1338, 0.12], [1342, 0.3], [1345, 1], [1352, 0.92], [1358, 0.7], [1365, 0.5], [1378, 0.35], [1384, 0.1], [1387, 1], [1392, 1], [1395, 0.6], [1400, 0.62], [1409, 0.72], [1415, 0.5], [1428, 0.38], [1433, 0.68], [1440, 0.52], [1450, 0.42], [1458, 0.25], [1465, 0.08], [1475, 0.05], [1515, 0.03], [1517, 0.7], [1521, 0.35], [1527, 0.12], [1540, 0.08], [1560, 0.06], [1590, 0.02], [1615, 0.02], [1616, 0.46], [1620, 0.25], [1626, 0.08], [1640, 0.05], [1648, 0.05], [1649, 0.85], [1652, 0.7]];
const OVER: Pts = [[76, 0.95], [300, 0.96], [550, 1], [565, 0.85], [575, 0.62], [590, 0.42], [606, 0.28], [618, 0.35], [632, 0.7], [645, 0.5], [660, 0.55], [690, 0.65], [720, 0.75], [745, 0.6], [762, 0.92], [780, 0.85], [796, 0.65], [804, 0.12], [806, 0.2], [808, 1], [1320, 1], [1360, 0.9], [1400, 0.8], [1440, 0.5], [1480, 0.3], [1520, 0.12], [1550, 0.02], [1652, 0.02]];

function mainWave(seed: number, cy: number, half: number) {
  const r = rng(seed);
  const f = lerpAt(ENV);
  let body = '';
  let spikes = '';
  let prev = 0;
  for (let x = 0; x < 1576; x++) {
    const e = f(x + 76);
    const attack = e - prev > 0.2;
    prev = e;
    const quiet = e < 0.13;
    const lo = quiet ? 0.55 : e > 0.8 ? 0.42 : 0.36;
    const up = e * half * (lo + r() * 0.25);
    const dn = e * half * (lo + r() * 0.25);
    body += `M${x + 0.5} ${Math.round(cy - Math.max(1, up))}V${Math.round(cy + Math.max(1, dn))}`;
    if (x % 3 === 0 || quiet || attack || r() < 0.06) {
      const k = attack ? 1 : 0;
      const a = e * half * Math.max(k, 0.76 + r() * 0.26);
      const b = e * half * Math.max(k * 0.96, 0.68 + r() * 0.32);
      spikes += `M${x + 0.5} ${Math.round(cy - Math.min(half, a))}V${Math.round(cy + Math.min(half, b))}`;
    }
  }
  return { body, spikes };
}
function overviewWave(seed: number, cy: number, half: number) {
  const r = rng(seed);
  const f = lerpAt(OVER);
  let d = '';
  for (let x = 0; x < 1576; x++) {
    let e = f(x + 76);
    if (x < 220 && x % 14 < 4) e *= 0.35 + r() * 0.4;
    else if (r() < (x < 480 ? 0.25 : 0.1)) e *= 0.68;
    e *= 1 - r() * (x < 480 ? 0.24 : 0.16);
    const h = Math.max(0.6, e * half);
    d += `M${x + 0.5} ${(cy - h).toFixed(1)}V${(cy + h).toFixed(1)}`;
  }
  return d;
}

const WAVE_W = 1576;
const px = pct(WAVE_W);

const Overview = () => {
  const labels = ['0', '30 s', '1 mn', '1 mn 30 s', '2 mn', '2 mn 30 s', '3 mn', '3 mn 30 s', '4 mn', '4 mn 30 s', '5 mn', '5 mn 30 s'];
  return (
    <WaveSvg height="84" role="img" aria-label="Overview waveform">
      <rect x={px(45)} width={px(47)} y="15" height="18" fill="#4d4d4d" />
      <line x1="0" x2="100%" y1="14.500" y2="14.500" stroke="#8a8a8a" />
      <line x1="0" x2="100%" y1="32.500" y2="32.500" stroke="#8a8a8a" />
      {labels.map((t, i) => (
        <g key={t}>
          <line x1={px(0.5 + i * 137.2)} x2={px(0.5 + i * 137.2)} y1="15" y2="32" stroke="#c8c8c8" />
          <text x={px(3 + i * 137.2)} y="25" fontSize="10" fill="#cfcfcf">{t}</text>
          {Array.from({ length: 9 }, (_, k) => {
            const x = px(0.5 + i * 137.2 + (k + 1) * 13.72);
            return <line key={k} x1={x} x2={x} y1={k === 4 ? 26 : 29} y2="32" stroke="#c8c8c8" />;
          })}
        </g>
      ))}
      {[39, 51, 65, 77].map(y => <line key={y} x1="0" x2="100%" y1={y + 0.5} y2={y + 0.5} stroke="#777" strokeDasharray="1 2" />)}
      <svg width="100%" height="84" viewBox={`0 0 ${WAVE_W} 84`} preserveAspectRatio="none">
        <path d={overviewWave(5, 45.5, 12.8) + overviewWave(5, 71.5, 12.8)} stroke="#048ad4" />
      </svg>
      <line x1="0" x2="100%" y1="58.500" y2="58.500" stroke="#8a8a8a" />
      <rect x={px(65)} width="2" y="33" height="51" fill="#5fe08f" />
      <line x1={px(1500.5)} x2={px(1500.5)} y1="14" y2="84" stroke="#b85a78" />
      <svg x="0" y="1" width="7" height="12"><path d="M1 0l6 6-6 6z" fill="#0fae12" /></svg>
      <svg x={px(1494)} y="1" width="7" height="12"><path d="M6 0L0 6l6 6z" fill="#0fae12" /></svg>
    </WaveSvg>
  );
};

const MainWave = () => {
  const chans = [mainWave(21, 106, 83), mainWave(34, 281, 83)];
  return (
    <WaveSvg height="367" role="img" aria-label="Stereo waveform">
      <rect width="100%" y="0" height="19" fill="#474747" />
      <line x1="0" x2="100%" y1=".500" y2=".500" stroke="#8a8a8a" />
      <line x1="0" x2="100%" y1="18.500" y2="18.500" stroke="#8a8a8a" />
      {Array.from({ length: 10 }, (_, i) => {
        const x0 = -3 + i * 157.4;
        return (
          <g key={i}>
            {i > 0 && <line x1={px(x0 + 0.5)} x2={px(x0 + 0.5)} y1="1" y2="18" stroke="#d0d0d0" />}
            <text x={px(x0 + 4)} y="11" fontSize="10" fill="#cfcfcf">{`${10 + i} s`}</text>
            {Array.from({ length: 9 }, (_, k) => {
              const x = px(x0 + 0.5 + (k + 1) * 15.74);
              return <line key={k} x1={x} x2={x} y1={k === 4 ? 11 : 14} y2="18" stroke="#c8c8c8" />;
            })}
          </g>
        );
      })}
      <line x1={px(1572)} x2={px(1572)} y1="1" y2="18" stroke="#d0d0d0" />
      {[64, 146, 239, 321].map(y => <line key={y} x1="0" x2="100%" y1={y + 0.5} y2={y + 0.5} stroke="#777" strokeDasharray="1 2" />)}
      <line x1="0" x2="100%" y1="193.500" y2="193.500" stroke="#8a8a8a" />
      <svg width="100%" height="367" viewBox={`0 0 ${WAVE_W} 367`} preserveAspectRatio="none">
        {chans.map((c, i) => <g key={i}><path d={c.body} stroke="#048ad4" /><path d={c.spikes} stroke="#1f97e0" /></g>)}
      </svg>
      <rect x={px(664)} width="3" y="19" height="348" fill="#5fe08f" />
    </WaveSvg>
  );
};

const DB_MARKS: [number, string][] = [[23, 'dB 0'], [64, '-6'], [106, 'dB -∞'], [146, '-6'], [187, 'dB 0'], [199, 'dB 0'], [239, '-6'], [281, 'dB -∞'], [321, '-6'], [363, 'dB 0']];
const DbScale = () => (
  <ScaleSvg height="367">
    {DB_MARKS.map(([y, t]) => (
      <g key={y}>
        <line x1="32" x2="35" y1={y + 0.5} y2={y + 0.5} stroke="#c8c8c8" />
        <text x="31" y={y + 4} fontSize="9" fill="#a0a0a0" textAnchor="end">{t}</text>
      </g>
    ))}
  </ScaleSvg>
);

const Tri = ({ d }: { d: string }) => <svg width="7" height="7" viewBox="0 0 8 8"><path d={d} fill="#8c8c8c" /></svg>;
const UP = 'M4 1l4 6H0z';
const DN = 'M0 1h8L4 7z';
const LT = 'M6 0v8L1 4z';
const RT = 'M2 0v8l5-4z';

const Views = ({ flip, lead, size, label }: { flip?: boolean; lead: number; size: number; label: string }) => (
  <ViewRow role="toolbar" aria-label={label}>
    <b>LR</b>
    <ViewTab $on $w={65}>Waveform</ViewTab>
    <ViewTab $w={82}>Spectrogram</ViewTab>
    <ViewTab $w={52}>Wavelet</ViewTab>
    <ViewTab $w={64}>Loudness</ViewTab>
    <ViewIcon aria-label="Options"><Ico n="check" s={12} /></ViewIcon>
    <ViewIcon aria-label="Swap"><Ico n="updown" s={12} /></ViewIcon>
    <ViewIcon $on={flip} aria-label="Snap"><Ico n="flip" s={11} /></ViewIcon>
    <HArrow aria-label="Scroll left"><Tri d={LT} /></HArrow>
    <HTrack $lead={lead} $size={size} />
    <HArrow aria-label="Scroll right"><Tri d={RT} /></HArrow>
    <Gap $w={14} />
    <HJog />
  </ViewRow>
);

const EditorPanel = () => (
  <Editor>
    <EditorHead>
      <svg width="16" height="12" viewBox="0 0 16 12"><path d="M1 8C2-1 4-1 5 5s2 7 3 1 2-6 3 0 2 7 4 3" fill="none" stroke={BLUE} strokeWidth="1.800" /><path d="M5 5.500c1 7 2 7 3 .500M11 6.500c1 6 3 6 4 3" fill="none" stroke="#fff" strokeWidth="1.800" /></svg>
      <h2>AUDIOEDITOR</h2>
      <HeadTools>
        <button aria-label="New"><Ico n="newdoc" /></button>
        <button aria-label="Open"><Ico n="folder" /></button><Sep />
        <button aria-label="Save"><Ico n="save" c="#5c5c5c" /></button>
        <button aria-label="Save as"><Ico n="saveAs" /></button><Sep />
        <button aria-label="Revert"><Ico n="recycle" c="#5c5c5c" /></button><Sep />
        <button aria-label="Undo"><Ico n="undo" c="#5f5f5f" /></button>
        <button aria-label="Redo"><Ico n="redo" c="#5f5f5f" /></button><Sep />
        <button aria-label="Back"><Ico n="left" c="#666" /></button>
        <button aria-label="Forward"><Ico n="right" c="#666" /></button>
        <SelectWrap><HistorySelect aria-label="Navigate"><option> </option></HistorySelect><Down c="#e0e0e0" /></SelectWrap><Sep />
        <button aria-label="Customize"><Ico n="bolted" s={11} w={12} /></button>
        <button aria-label="Maximize"><Ico n="window" s={12} w={14} /></button>
        <button aria-label="Layout"><Ico n="menu" s={12} /></button>
      </HeadTools>
    </EditorHead>
    <EditorInner>
      <RibbonTabs>
        <RibbonTab $w={60}><Logo />FILE</RibbonTab>
        <RibbonTab $w={72}><Ico n="eye" s={16} />VIEW</RibbonTab>
        <RibbonTab $w={68} $on><Ico n="e" s={14} />EDIT</RibbonTab>
        <RibbonTab $w={80}><Ico n="insert" />INSERT</RibbonTab>
        <RibbonTab $w={94}><Ico n="cogs" s={16} />PROCESS</RibbonTab>
        <RibbonTab $w={115}><Ico n="bolt" />CORRECTION</RibbonTab>
        <RibbonTab $w={104}><Ico n="ring" s={15} />SPECTRUM</RibbonTab>
        <RibbonTab $w={94}><Ico n="signal" s={13} />ANALYZE</RibbonTab>
        <RibbonTab $w={88}><Ico n="render" s={13} />RENDER</RibbonTab>
        <MenuDots aria-label="Collapse ribbon"><Ico n="caret" s={10} /></MenuDots>
      </RibbonTabs>
      <Ribbon>
        <Group $w={57}><GroupBody>
          <BigCmd $dim $w={54}>
            <svg width="30" height="38" viewBox="0 0 30 38"><path d="M1 18l11-10v20z" fill="#6c6e70" /><path d="M11 4l14 15-14 15" fill="none" stroke="#6c6e70" strokeWidth="5" /></svg>
            <BigLabel><span>Edit</span><span>Project</span></BigLabel>
          </BigCmd>
        </GroupBody><GroupName>SOURCE</GroupName></Group>
        <Group $w={37}><GroupBody><Stack>
          <Tool $on aria-label="Time selection"><svg width="15" height="15"><path d="M.500 .500h14v14H.500z" fill="#0c4c7c" stroke="#061a2a" /><path d="M5 1h5v13H5z" fill="#fff" /></svg></Tool>
          <Tool aria-label="Pen"><Ico n="pencil" s={16} /></Tool>
          <Tool aria-label="Play tool"><Ico n="speaker" s={15} c={BLUE} /></Tool>
        </Stack></GroupBody><GroupName>TOOLS</GroupName></Group>
        <Group $w={169}><GroupBody>
          <Stack $w={66}>
            <Cmd><Ico n="corner" s={8} w={16} /><span>Range</span><Down /></Cmd>
            <Cmd><Ico n="extend" s={16} /><span>Extend</span><Down /></Cmd>
            <Cmd $dim><Blank /><span>Toggle</span></Cmd>
          </Stack>
          <Gap $w={6} />
          <Stack $w={78}>
            <Cmd><Ico n="all" s={16} /><span>All</span></Cmd>
            <Cmd><Ico n="channels" s={16} /><span>Channels</span><Down /></Cmd>
            <Cmd><Blank /><span>Regions</span><Down /></Cmd>
          </Stack>
          <Gap $w={8} />
        </GroupBody><GroupName>TIME SELECTION</GroupName></Group>
        <Group $w={190}><GroupBody>
          <TallStack $w={62} $row={30}>
            <Cmd $dim><Ico n="scissors" s={16} /><span>Cut</span></Cmd>
            <Cmd><Ico n="copy" s={17} /><span>Copy</span><Down /></Cmd>
          </TallStack>
          <BigCmd $dim $w={48}>
            <svg width="36" height="38" viewBox="0 0 36 38"><path d="M4 10L10 1l6 9z" fill="#707274" /><path d="M10 10v14M16 7h12v18H10V16M28 13h4v18H17v-5" fill="none" stroke="#707274" strokeWidth="2" /></svg>
            <BigLabel><span>Paste</span><Down c="#707274" /></BigLabel>
          </BigCmd>
          <BigCmd $dim $w={66}>
            <svg width="36" height="38" viewBox="0 0 36 38"><path d="M2 3l32 32M34 3L2 35" stroke="#707274" strokeWidth="2" /></svg>
            <BigLabel><span>Paste and</span><span>Crossfade<Down c="#707274" /></span></BigLabel>
          </BigCmd>
        </GroupBody><GroupName>CLIPBOARD</GroupName></Group>
        <Group $w={116}><GroupBody><Stack>
          <Cmd $dim><Ico n="crop" s={16} /><span>Crop</span></Cmd>
          <Cmd $dim><Ico n="eraser" s={16} /><span>Delete</span></Cmd>
          <Cmd $dim><Ico n="cross" s={16} /><span>Smooth Delete</span></Cmd>
        </Stack></GroupBody><GroupName>CUTTING</GroupName></Group>
        <Group $w={84}><GroupBody>
          <BigCmd $w={80}>
            <svg width="34" height="38" viewBox="0 0 34 38"><path d="M1 9h7c8 0 5 18 14 18h5" fill="none" stroke="#fff" strokeWidth="5" /><path d="M24 20l9 7-9 6z" fill="#fff" /><path d="M1 28h10M16 11h10" stroke={BLUE} strokeWidth="5" /><path d="M24 4l9 7-9 6z" fill={BLUE} /></svg>
            <BigLabel><span>Swap Stereo</span><span>Channels</span></BigLabel>
          </BigCmd>
        </GroupBody><GroupName>OTHER</GroupName></Group>
        <Group $w={39}><GroupBody><TallStack $row={32}>
          <Cmd $dim aria-label="Nudge left"><svg width="16" height="10"><path d="M.500 .500h15v9H.500z" fill="none" stroke="#747678" /><path d="M13 2v6L8 5z" fill="#8a8c8e" /></svg></Cmd>
          <Cmd $dim aria-label="Nudge right"><svg width="16" height="10"><path d="M.500 .500h15v9H.500z" fill="none" stroke="#747678" /><path d="M3 2v6l5-3z" fill="#8a8c8e" /></svg></Cmd>
        </TallStack></GroupBody><GroupName>NUDGE</GroupName></Group>
        <Group $w={128}><GroupBody><Stack $w={108}>
          <Tick><input type="checkbox" defaultChecked />Zero-Crossing</Tick>
          <Tick><input type="checkbox" defaultChecked />Snap to Magnets</Tick>
          <Cmd><Ico n="magnet" s={14} /><span>Magnets</span><Down /></Cmd>
        </Stack></GroupBody><GroupName>SNAPPING</GroupName></Group>
        <Group $w={60}><GroupBody>
          <BigCmd $w={56}>
            <svg width="34" height="38" viewBox="0 0 34 38"><path d="M11 3H2v31h9M23 3h9v31h-9" fill="none" stroke={BLUE} strokeWidth="2.600" /><path d="M13 20c2-7 13-7 13 1 0 3-1 5-3 6" fill="none" stroke="#fff" strokeWidth="3" /><path d="M9 14l1 12 9-6z" fill="#fff" /></svg>
            <BigLabel><span>Recover</span><Down /></BigLabel>
          </BigCmd>
        </GroupBody><GroupName>HISTORY</GroupName></Group>
        <Group $w={78}><GroupBody>
          <BigCmd $w={70}>
            <svg width="34" height="38" viewBox="0 0 34 38"><path d="M15 24H6V5h19v10" fill="none" stroke="#fff" strokeWidth="2.400" /><path d="M18 18c1 8 5 10 8 10" fill="none" stroke={BLUE} strokeWidth="4" /><path d="M24 20l9 8-10 6z" fill={BLUE} /></svg>
            <BigLabel><span>External</span><span>Editor<Down /></span></BigLabel>
          </BigCmd>
        </GroupBody><GroupName>EDITORS<Ico n="corner" s={7} /></GroupName></Group>
        <svg width="50" height="42" viewBox="0 0 50 42" style={{ margin: '33px 10px 0 auto' }}>
          <path d="M2 20C5-3 13-3 17 20M31 20C34-3 42-3 46 20" fill="none" stroke={BLUE} strokeWidth="4.500" />
          <path d="M17 20c3 24 11 24 14 0M46 20c.500 4 1 7 2 11" fill="none" stroke="#fff" strokeWidth="4.500" />
        </svg>
      </Ribbon>
      <FileTabs>
        <FileTab><Ico n="speaker" s={13} c="#14e214" />File Group 1</FileTab>
        <AddTab aria-label="Add tab"><Ico n="plus" s={12} /><Down c="#888" /></AddTab>
      </FileTabs>
      <FileBody>
        <FileHead>
          <ClipTab><Ico n="speaker" s={13} c="#14e214" />Something Is Wrong</ClipTab>
          <Empty /><button aria-label="Layout"><Ico n="menu" s={11} /></button>
        </FileHead>
        <WaveFrame>
          <WaveGrid>
            <span /><Overview />
            <VBar><ArrowBox aria-label="Zoom"><Tri d={UP} /></ArrowBox><VJog $h={66} /></VBar>
          </WaveGrid>
          <Views lead={0} size={75} label="Overview" />
          <Splitter><div><Ico n="vsplit" s={15} /><Ico n="hsplit" s={14} /></div><i /><ArrowBox aria-label="Scroll up"><Tri d={UP} /></ArrowBox></Splitter>
          <WaveGrid>
            <DbScale /><MainWave />
            <VBar>
              <VTrack><VThumb /></VTrack><ArrowBox aria-label="Scroll down"><Tri d={DN} /></ArrowBox><VJog $h={72} />
            </VBar>
          </WaveGrid>
          <Views flip lead={2} size={2} label="Main view" />
          <StatusRow>
            <StatusCell $w={44}><Ico n="ibeam" s={12} />0 s</StatusCell>
            <StatusCell $w={120}><Ico n="rule" s={12} />5 mn 27 s 500 ms</StatusCell>
            <StatusCell $w={47}><Ico n="note" s={12} />C 3</StatusCell>
            <StatusCell $w={31} aria-label="Zoom"><i /><Ico n="zoom" s={11} /><i /></StatusCell>
            <StatusCell $w={152}><Ico n="info" s={11} />Stereo 16 bit 44 100 Hz</StatusCell>
            <Gap $w={4} />
            <StatusCell $w={34} aria-label="Favorites"><Ico n="starOff" s={12} /><Ico n="star" s={12} /></StatusCell>
          </StatusRow>
        </WaveFrame>
      </FileBody>
    </EditorInner>
    <Transport>
      <Chevrons aria-label="Collapse">«</Chevrons>
      <KeyRow>
        <Key $w={24} aria-label="Start"><Ico n="first" s={12} /></Key>
        <Key $w={24} aria-label="End"><Ico n="last" s={12} /></Key>
        <Key $w={38} aria-label="Rewind"><Ico n="rew" s={14} /></Key>
        <Key $w={37} aria-label="Forward"><Ico n="ffw" s={14} /></Key>
        <Key $w={37} aria-label="Loop"><Ico n="cycle" s={15} /></Key>
        <Key $w={37} aria-label="Stop"><Ico n="stop" s={12} /></Key>
        <Key $w={37} $go aria-label="Play"><Ico n="play" s={14} /></Key>
        <Key $w={36} aria-label="Record"><Ico n="rec" s={15} /></Key>
      </KeyRow>
      <Readout $w={190}>00 h 00 mn 14 s 231 ms</Readout>
      <Readout $w={127}><i /></Readout>
    </Transport>
  </Editor>
);

/* ---------- master section ---------- */

const Master = styled.section`flex: 0 0 234px; display: flex; flex-direction: column;`;
const MasterBody = styled.div`flex: 1; background: #464646; border: 2px solid #5a5a5a; border-top: 0; padding: 7px 6px 6px; display: flex; flex-direction: column;`;
const MRow = styled.div`display: flex; gap: 4px; height: 22px; margin-bottom: 9px;`;
const MBtn = styled.button<{ $w?: number }>`
  ${p => (p.$w ? css`width: ${p.$w}px;` : css`flex: 1;`)} height: 22px; background: #525252; border: 1px solid #2e2e2e; display: flex; align-items: center; justify-content: center; gap: 5px; color: #dcdcdc;
`;
const NameBtn = styled(MBtn)`justify-content: flex-start; padding-left: 4px; font-weight: 600; font-size: 12px; margin: 0 1px 0 0;`;
const MHead = styled.h3`
  margin: 0; height: 21px; background: #595959; border: 1px solid #2f2f2f; font-size: 12px; font-weight: 600; color: #d8d8d8; display: flex; align-items: center; justify-content: space-between; padding: 0 2px 0 3px;
`;
const MBox = styled.div`background: #323232; padding: 4px 3px 2px; display: grid; gap: 4px; margin-bottom: 11px;`;
const Slot = styled.button`
  height: 20px; border-radius: 2px; background: linear-gradient(#5f7788, #647b8b 40%, #56697a); display: flex; align-items: center; gap: 9px; padding: 0 3px 0 4px; color: #3d4d5a; font-size: 12px;
  .end { margin-left: auto; }
`;
const Values = styled.div`height: 25px; display: flex; align-items: center; padding-left: 49px; gap: 8px; font-size: 12px; span:nth-child(n+3) { color: #e05252; margin-right: 1px; }`;
const LevelBox = styled.div`background: #2c2c2c; margin-bottom: 10px;`;
const FaderBox = styled.div`
  margin: 0 3px; height: 302px; background: #171c20; border-radius: 4px; display: grid; grid-template-columns: 52px 23px 8px 23px 9px 15px 14px 15px 2px 51px; justify-items: center;
  svg text { font-size: 9px; fill: #8e9296; }
`;
const Fader = styled.input`
  appearance: none; writing-mode: vertical-lr; direction: rtl; width: 16px; height: 266px; margin: 18px 0 0; background: linear-gradient(90deg, transparent 7px, #44484b 7px 9px, transparent 9px);
  &::-webkit-slider-thumb { appearance: none; width: 16px; height: 30px; border-radius: 2px; background: linear-gradient(#e8eaec, #b9bdc0 30%, #f2f3f4 46%, #1a1a1a 48% 53%, #f2f3f4 55%, #cfd2d4 85%, #84878a); }
`;
const Meter = styled.div<{ $over?: boolean }>`
  width: 14px; height: 265px; margin-top: 19px; display: flex; flex-direction: column; background: #101214;
  &::before { content: ""; height: ${p => (p.$over ? 52 : 56)}px; }
`;
const Hold = styled.i`height: 2px; background: #ff1320; margin-bottom: 5px;`;
const Seg = styled.i<{ $h?: number; $c: string }>`${p => (p.$h ? css`height: ${p.$h}px;` : css`flex: 1;`)} background: ${p => p.$c};`;
const LevelButtons = styled.div`height: 30px; display: flex; align-items: center; padding-left: 56px; gap: 22px; div { display: flex; }`;
const SmallBtn = styled.button<{ $on?: boolean }>`width: 21px; height: 20px; background: ${p => (p.$on ? '#1682c4' : '#4e4e4e')}; display: grid; place-items: center; color: #e0e0e0;`;
const Bar = styled.div`display: flex; margin-bottom: 9px; ${MHead} { flex: 1; } ${MBtn} { height: 21px; border-left: 0; }`;
const RenderRow = styled.div`display: flex; justify-content: space-between; align-items: center; padding-left: 38px;`;

const SCALE: [number, string][] = [[32, '+6'], [46, '+3'], [61, '+1'], [81, '0'], [102, '-1'], [117, '-3'], [132, '-6'], [153, '-12'], [183, '-24'], [205, '-36'], [225, '-48'], [257, '-72'], [284, '-96']];
const MINOR = [21, 71, 92, 143, 161, 169, 195, 215, 233, 242, 271];

const Ticks = ({ w, at, small, tx, anchor }: { w: number; at: number; small: number; tx?: number; anchor?: 'end' | 'middle' }) => (
  <svg width={w} height="302" shapeRendering="crispEdges">
    {SCALE.map(([y, t]) => (
      <g key={t}>
        <path d={`M${at} ${y + 0.5}h8`} stroke="#8e9296" />
        {tx !== undefined && <text x={tx} y={y + 3} textAnchor={anchor} fontWeight={t === '0' ? 700 : 400}>{t}</text>}
      </g>
    ))}
    {MINOR.map(y => <path key={y} d={`M${small} ${y + 0.5}h4`} stroke="#8e9296" />)}
  </svg>
);

const FADE = 'linear-gradient(#5dbdff, #5bb9f8 18%, #2a5b7b)';

const MasterSection = () => (
  <Master>
    <TabStrip>
      <Tab $on $w={119}><Ico n="star" s={12} /><TabTitle a="MASTER" b="SECTION" /></Tab>
      <MenuDots aria-label="Layout"><Ico n="menu" s={11} /></MenuDots>
    </TabStrip>
    <MasterBody>
      <MRow>
        <MBtn $w={21} aria-label="Power"><Ico n="power" s={13} /></MBtn>
        <MBtn $w={33} aria-label="Monitor"><Ico n="mic" s={15} /><svg width="6" height="18"><path d="M6 11v6H0z" fill="#bbb" /></svg></MBtn>
        <NameBtn>Untitled</NameBtn>
        <MBtn $w={65} aria-label="Presets"><Ico n="gauge" s={16} /><Ico n="back" s={13} /><Ico n="check" s={16} /></MBtn>
      </MRow>
      <MHead>Effects<Ico n="slot" s={15} /></MHead>
      <MBox>
        {[0, 1].map(i => <Slot key={i}><Ico n="equals" s={10} /><Ico n="signal" s={11} /><span className="end"><Ico n="solo" s={12} /></span><Ico n="slotTop" s={15} /></Slot>)}
        <Slot><Ico n="plus" s={12} c="#0b0f12" /></Slot>
      </MBox>
      <MHead>Resampling<Ico n="clock" s={15} /></MHead>
      <MBox>
        <Slot><Ico n="arcs" s={12} c="#0a1722" /><Ico n="signal" s={11} />Off</Slot>
      </MBox>
      <MHead>Master Level<Ico n="fader" s={14} /></MHead>
      <LevelBox>
        <Values><span>0 dB</span><span>0 dB</span><span>+0.38</span><span>+0.27</span></Values>
        <FaderBox>
          <Ticks w={52} at={44} small={48} tx={38} anchor="end" />
          <Fader type="range" min={0} max={100} defaultValue={80} aria-label="Left level" />
          <Ticks w={8} at={0} small={4} />
          <Fader type="range" min={0} max={100} defaultValue={80} aria-label="Right level" />
          <Ticks w={9} at={0} small={3} />
          <Meter $over><Hold /><Seg $h={4} $c="#ff1320" /><Seg $h={27} $c="#d7d957" /><Seg $c={FADE} /></Meter>
          <i />
          <Meter><Seg $h={7} $c="#ff1320" /><Seg $h={27} $c="#d7d957" /><Seg $c={FADE} /></Meter>
          <i />
          <Ticks w={51} at={0} small={0} tx={20} anchor="middle" />
        </FaderBox>
        <LevelButtons>
          <div><SmallBtn aria-label="Lines"><Ico n="equals" s={11} /></SmallBtn><SmallBtn $on aria-label="Drop"><Ico n="drop" s={12} /></SmallBtn></div>
          <div><SmallBtn aria-label="Link"><Ico n="link" s={14} /></SmallBtn><SmallBtn aria-label="Unlock"><Ico n="lock" s={11} /></SmallBtn></div>
        </LevelButtons>
      </LevelBox>
      <MHead>Final Effects / Dithering<Ico n="four" s={12} /></MHead>
      <MBox>
        {[0, 1].map(i => <Slot key={i}><Ico n="signal" s={11} /><span className="end" /><Ico n="slotTop" s={15} /></Slot>)}
      </MBox>
      <Bar><MHead>Playback Processing</MHead><MBtn $w={21} aria-label="Insert"><Ico n="plugin" s={14} /></MBtn><MBtn $w={21} aria-label="Monitor"><Ico n="monitor" s={14} /></MBtn></Bar>
      <Bar><MHead>Speaker Configuration<Ico n="speaker" s={14} /></MHead></Bar>
      <RenderRow>
        <MBtn $w={68}><Ico n="render" s={13} />Render<svg width="5" height="18"><path d="M5 12v5H0z" fill="#ccc" /></svg></MBtn>
        <span>44 100 Hz</span>
      </RenderRow>
    </MasterBody>
  </Master>
);

/* ---------- application ---------- */

export default function App() {
  return (
    <Page>
      <Global />
      <TitleBar>
        <MenuBar>
          <Logo />
          {['File', 'Meters', 'Tool Windows', 'Workspace', 'Help'].map(m => <MenuItem key={m}>{m}</MenuItem>)}
        </MenuBar>
        <TitleText>WaveLab Pro 11 - [Something Is Wrong.wav (F:\Music\Implode Sch)]</TitleText>
        <WinButtons>
          <button aria-label="Compact"><Ico n="shrink" s={13} /></button>
          <button aria-label="Minimize"><Ico n="minimize" s={11} /></button>
          <button aria-label="Restore"><Ico n="restore" s={12} /></button>
          <button aria-label="Close"><Ico n="close" s={11} /></button>
        </WinButtons>
      </TitleBar>
      <Workspace>
        <SideStrip>
          <SideTab $h={83}><Ico n="grid" s={13} /><TabTitle a="BIT" b="METER" /></SideTab>
          <SideTab $h={84} $dim><Ico n="rack" s={13} /><span>PLUG-INS</span></SideTab>
        </SideStrip>
        <Main>
          <Row>
            <Dock $grow={859}>
              <TabStrip>
                <Tab $w={102}><Ico n="list" s={12} /><TabTitle a="FILE" b="BROWSER" /></Tab>
                <Tab $w={131}><Ico n="grid" s={12} /><TabTitle a="PROJECT" b="MANAGER" /></Tab>
                <Tab $w={86}><Ico n="tag" s={12} /><TabTitle a="META" b="DATA" /></Tab>
                <Tab $w={81}><Ico n="markers" s={12} /><TabTitle a="MARKERS" b="" /></Tab>
                <Tab $on $w={113}><Ico n="peak" s={12} /><TabTitle a="SPECTRO" b="METER" /></Tab>
                <Tab $w={112}><Ico n="bars" s={12} /><TabTitle a="SPECTRO" b="SCOPE" /></Tab>
                <MenuDots aria-label="Layout"><Ico n="menu" s={11} /></MenuDots>
              </TabStrip>
              <DockBody><Tools h={26} camera /><Spectrum /></DockBody>
            </Dock>
            <Dock $grow={791}>
              <TabStrip>
                <Tab $w={75}><Ico n="undo" s={12} /><TabTitle a="HISTORY" b="" /></Tab>
                <Tab $on $w={94}><Ico n="level" s={12} /><TabTitle a="LEVEL" b="METER" /></Tab>
                <Tab $w={122}><Ico n="diag" s={12} /><TabTitle a="LOUDNESS" b="METER" /></Tab>
                <Tab $w={95}><Ico n="scope" s={12} /><TabTitle a="WAVE" b="SCOPE" /></Tab>
                <Tab $w={132}><Ico n="picture" s={12} /><TabTitle a="LIVE" b="SPECTROGRAM" /></Tab>
                <MenuDots aria-label="Layout"><Ico n="menu" s={11} /></MenuDots>
              </TabStrip>
              <DockBody><Tools h={28} /><LevelMeter /></DockBody>
            </Dock>
            <Dock>
              <TabStrip>
                <Tab $on $w={99}><Ico n="phase" s={12} /><TabTitle a="PHASE" b="SCOPE" /></Tab>
                <Tab $w={86}><Ico n="film" s={12} /><TabTitle a="TIME" b="CODE" /></Tab>
                <MenuDots aria-label="Layout"><Ico n="menu" s={11} /></MenuDots>
              </TabStrip>
              <DockBody><Toolbar $h={26}><FnButton>Functions</FnButton></Toolbar><PhaseScope /></DockBody>
            </Dock>
          </Row>
          <BottomRow>
            <EditorPanel />
            <MasterSection />
          </BottomRow>
        </Main>
      </Workspace>
    </Page>
  );
}
